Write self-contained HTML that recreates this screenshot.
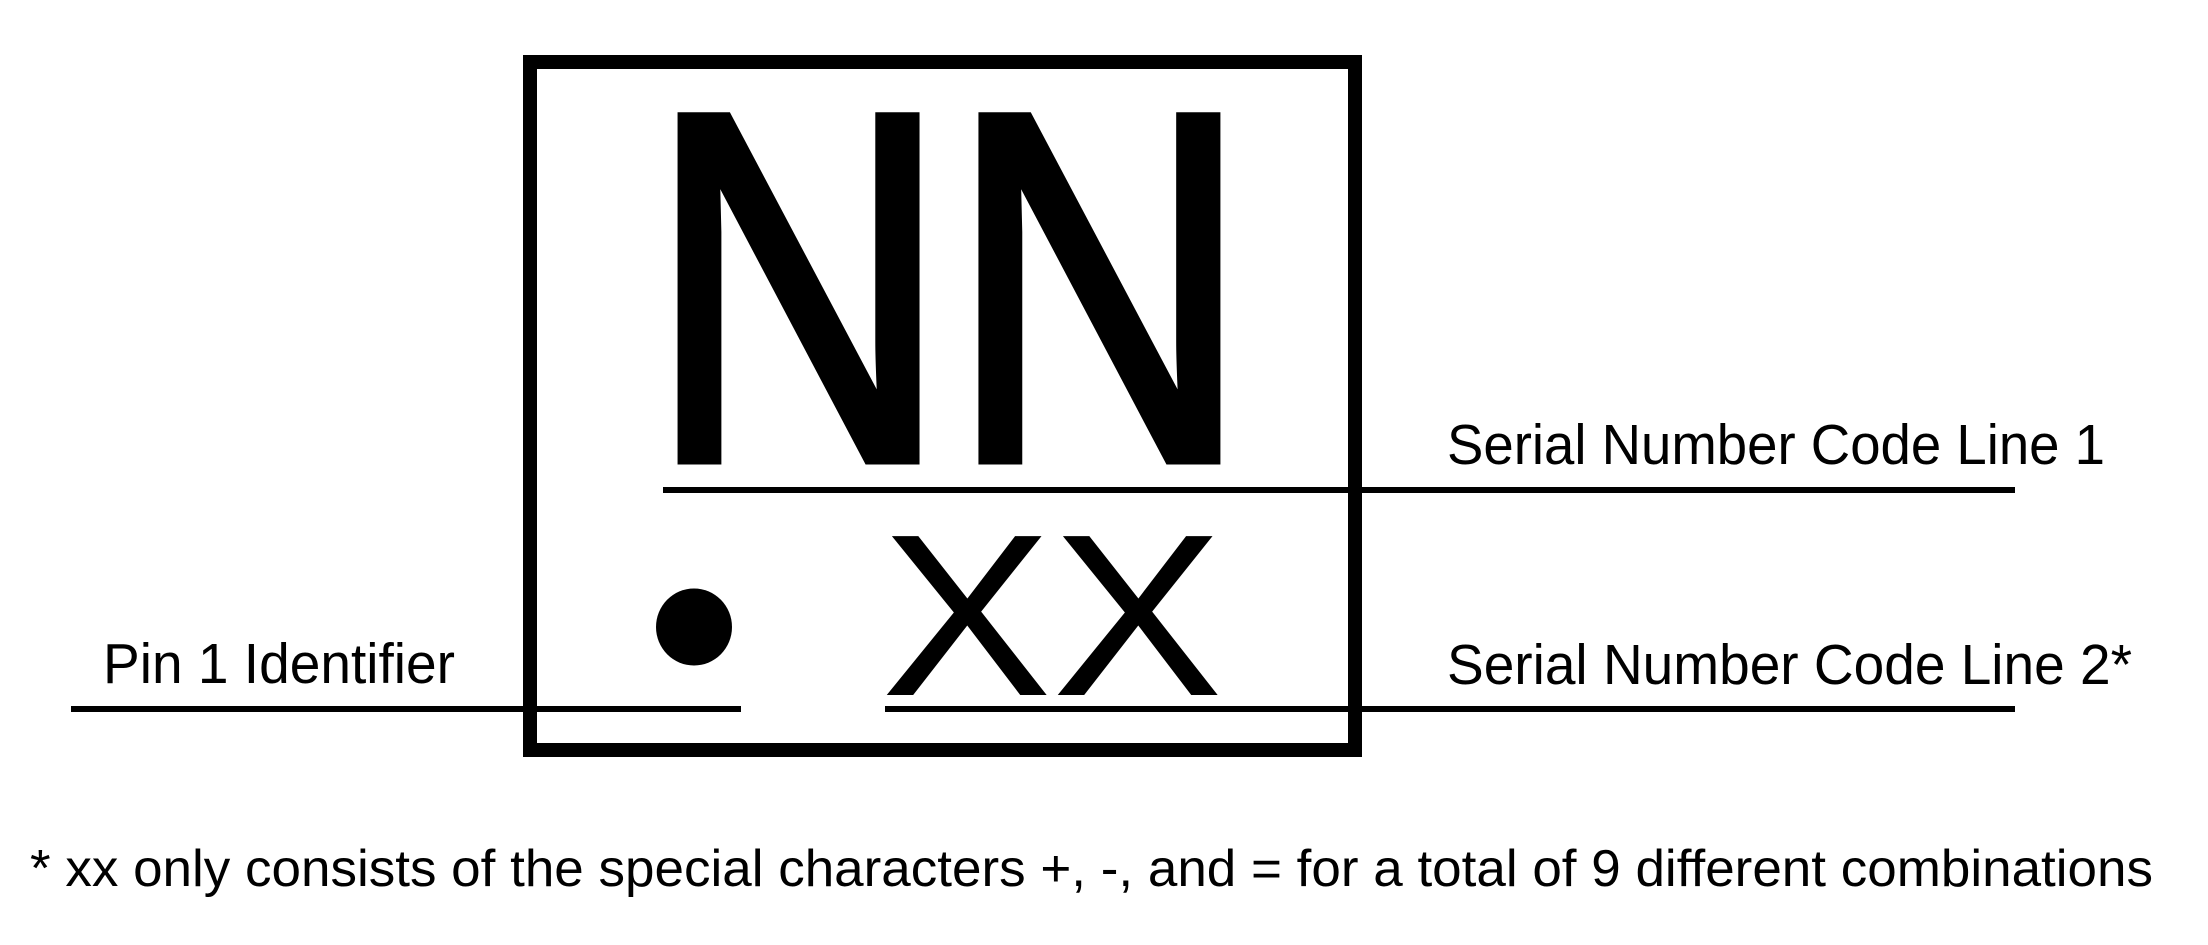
<!DOCTYPE html>
<html><head><meta charset="utf-8"><style>
html,body{margin:0;padding:0;background:#fff;}
svg{display:block;}
text{font-family:"Liberation Sans",Arial,sans-serif;fill:#000;}
</style></head><body>
<svg width="2208" height="945" viewBox="0 0 2208 945" xmlns="http://www.w3.org/2000/svg">
<rect x="0" y="0" width="2208" height="945" fill="#fff"/>
<rect x="530" y="62" width="825" height="688" fill="none" stroke="#000" stroke-width="14"/>
<rect x="663" y="487" width="1352" height="6" fill="#000"/>
<rect x="71" y="706" width="670" height="6" fill="#000"/>
<rect x="885" y="706" width="1130" height="6" fill="#000"/>
<text transform="translate(648,459) scale(0.84,1)" font-size="496" stroke="#000" stroke-width="11" stroke-linejoin="miter">NN</text>
<text transform="translate(881,695) scale(1.11,1)" font-size="231">XX</text>
<ellipse cx="694" cy="627" rx="38" ry="38.5" fill="#000"/>
<text x="1447" y="464" font-size="57" textLength="658" lengthAdjust="spacingAndGlyphs">Serial Number Code Line 1</text>
<text x="1447" y="684" font-size="57" textLength="685" lengthAdjust="spacingAndGlyphs">Serial Number Code Line 2*</text>
<text x="103" y="683" font-size="57" textLength="352" lengthAdjust="spacingAndGlyphs">Pin 1 Identifier</text>
<text x="30" y="886" font-size="52" textLength="2123" lengthAdjust="spacingAndGlyphs">* xx only consists of the special characters +, -, and = for a total of 9 different combinations</text>
</svg>
</body></html>
